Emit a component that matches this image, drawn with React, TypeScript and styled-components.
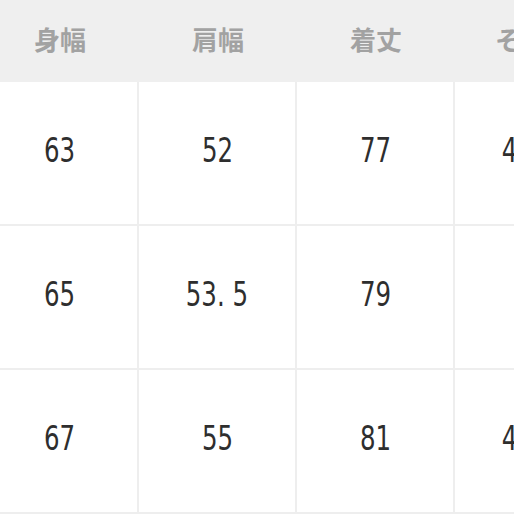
import { createGlobalStyle } from "styled-components";
import styled from "styled-components";

const GlobalStyle = createGlobalStyle`
  html, body {
    margin: 0;
    padding: 0;
    background: #fff;
  }
  body {
    width: 514px;
    height: 514px;
    overflow: hidden;
  }
`;

type SizeRow = {
  id: string;
  values: string[];
};

const headers = ["身幅", "肩幅", "着丈", "そで丈"];

const rows: SizeRow[] = [
  { id: "m", values: ["63", "52", "77", "46. 5"] },
  { id: "l", values: ["65", "53. 5", "79", "48"] },
  { id: "xl", values: ["67", "55", "81", "49. 5"] },
];

const Viewport = styled.div`
  width: 514px;
  height: 514px;
  overflow: hidden;
  background: #fff;
`;

const Table = styled.div`
  display: grid;
  grid-template-columns: repeat(4, 158px);
  grid-auto-rows: 144px;
  grid-template-rows: 82px;
  margin-left: -19px;
  width: 632px;
`;

const HeadCell = styled.div`
  display: flex;
  align-items: center;
  justify-content: center;
  padding-bottom: 6px;
  background: #efefef;
  color: #a2a2a2;
  font-family: "Noto Sans CJK JP", "Noto Sans", sans-serif;
  font-weight: 700;
  font-size: 26px;
`;

const Cell = styled.div`
  display: flex;
  align-items: center;
  justify-content: center;
  box-sizing: border-box;
  border-right: 2px solid #eeeeee;
  border-bottom: 2px solid #eeeeee;
  padding-bottom: 6px;
`;

// narrow digits, as in the size chart's condensed face
const Value = styled.span`
  display: inline-block;
  transform: scaleX(0.8);
  color: #2e2e2e;
  font-family: "DejaVu Sans Condensed", "DejaVu Sans", sans-serif;
  font-size: 34px;
  white-space: pre;
`;

const App = () => {
  return (
    <Viewport>
      <GlobalStyle />
      <Table>
        {headers.map((h) => (
          <HeadCell key={h}>{h}</HeadCell>
        ))}
        {rows.map((row) =>
          row.values.map((v, i) => (
            <Cell key={row.id + i}>
              <Value>{v}</Value>
            </Cell>
          ))
        )}
      </Table>
    </Viewport>
  );
};

export default App;
